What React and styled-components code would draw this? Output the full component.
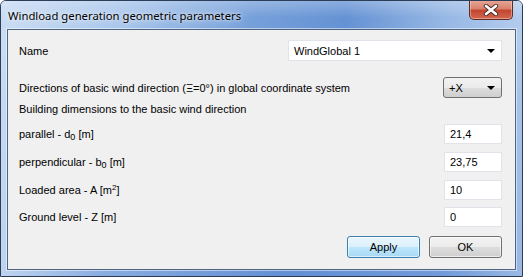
import React from "react";
import styled, { createGlobalStyle } from "styled-components";

const GlobalStyle = createGlobalStyle`
    html, body {
        margin: 0;
        padding: 0;
        background: #ffffff;
    }
    body {
        font-family: "Liberation Sans", Arial, sans-serif;
    }
`;

const Window = styled.div`
    width: 523px;
    height: 277px;
    box-sizing: border-box;
    display: flex;
    flex-direction: column;
    border: 1px solid #2c3e57;
    border-radius: 6px 6px 0 0;
    background:
        linear-gradient(90deg, rgba(214,229,246,0.8) 0%, rgba(175,203,236,0.5) 20%, rgba(110,152,212,0.1) 55%, rgba(150,185,228,0.3) 85%, rgba(190,212,238,0.6) 100%),
        linear-gradient(180deg, #b0cbec 0%, #86aadf 35%, #618dd3 100%);
    overflow: hidden;
`;

const TitleBar = styled.div`
    height: 28px;
    display: flex;
    align-items: flex-start;
    padding-left: 7px;
    background:
        linear-gradient(180deg, rgba(255,255,255,0.25) 0%, rgba(255,255,255,0) 60%),
        linear-gradient(90deg, #c9dcf3 0%, #aac7ec 22%, #76a0da 48%, #6592d4 66%, #98b9e5 86%, #b3cced 100%);
`;

const Title = styled.span`
    margin-top: 7px;
    font-family: "Noto Sans", "Open Sans", sans-serif;
    font-size: 11.3px;
    line-height: 16px;
    color: #000;
    text-shadow: 0 0 8px rgba(255,255,255,0.9), 0 0 3px rgba(255,255,255,0.9);
`;

const CloseButton = styled.div`
    margin-left: auto;
    margin-right: 9px;
    margin-top: -1px;
    width: 44px;
    height: 20px;
    box-sizing: border-box;
    border: 1px solid #5e2a22;
    border-top: none;
    border-radius: 0 0 5px 5px;
    background: linear-gradient(180deg, #e9a899 0%, #d9826e 45%, #c24630 55%, #d3674f 100%);
    display: flex;
    align-items: center;
    justify-content: center;
    box-shadow: inset 0 0 0 1px rgba(255,220,210,0.45);
`;

const Panel = styled.div`
    flex: 1;
    margin: 0 6px 6px 6px;
    background: #f0f0f0;
    border: 1px solid #4f6480;
    box-shadow: 0 0 0 1px rgba(255,255,255,0.5);
    padding: 10px 13px 0 11px;
    display: flex;
    flex-direction: column;
`;

const Row = styled.div`
    display: flex;
    align-items: center;
    justify-content: space-between;
    height: ${(p) => p.$h || 20}px;
    margin-top: ${(p) => p.$gap || 0}px;
    font-size: 11px;
    color: #000;
`;

const Label = styled.span`
    font-family: "Liberation Sans", Arial, sans-serif;
    font-size: 11px;
    white-space: nowrap;

    sub {
        font-size: 9px;
        vertical-align: -2px;
        line-height: 0;
    }
    sup {
        font-size: 8px;
        vertical-align: 4px;
        line-height: 0;
    }
`;

const Combo = styled.div`
    width: ${(p) => p.$w}px;
    height: 21px;
    box-sizing: border-box;
    display: flex;
    align-items: center;
    padding: 0 6px 0 5px;
    font-size: 11px;
    ${(p) =>
        p.$button
            ? `
        border: 1px solid #707070;
        border-radius: 3px;
        background: linear-gradient(180deg, #f2f2f2 0%, #ebebeb 50%, #dddddd 51%, #cfcfcf 100%);
    `
            : `
        border: 1px solid #e2e3ea;
        background: #ffffff;
    `}

    span {
        flex: 1;
    }
`;

const Arrow = styled.i`
    width: 0;
    height: 0;
    border-left: 4px solid transparent;
    border-right: 4px solid transparent;
    border-top: 4px solid #000;
`;

const Input = styled.div`
    width: 58px;
    height: 20px;
    box-sizing: border-box;
    border: 1px solid #e2e3ea;
    background: #fff;
    display: flex;
    align-items: center;
    padding-left: 5px;
    font-size: 11px;
`;

const Buttons = styled.div`
    display: flex;
    justify-content: flex-end;
    gap: 9px;
    margin-top: 9px;
`;

const Button = styled.div`
    width: 73px;
    height: 22px;
    box-sizing: border-box;
    border-radius: 3px;
    display: flex;
    align-items: center;
    justify-content: center;
    font-size: 11px;
    color: #000;
    border: 1px solid ${(p) => (p.$primary ? "#3c7fb1" : "#707070")};
    background: ${(p) =>
        p.$primary
            ? "linear-gradient(180deg, #eaf6fd 0%, #d9f0fc 50%, #bee6fd 51%, #a7d9f5 100%)"
            : "linear-gradient(180deg, #f2f2f2 0%, #ebebeb 50%, #dddddd 51%, #cfcfcf 100%)"};
    box-shadow: inset 0 0 0 1px rgba(255,255,255,0.6);
`;

function CloseIcon() {
    return (
        <svg width="16" height="12" viewBox="0 0 16 12">
            <path d="M3 2 L13 10 M13 2 L3 10" stroke="#4a2b25" strokeWidth="4.4" strokeLinecap="round" />
            <path d="M3 2 L13 10 M13 2 L3 10" stroke="#ffffff" strokeWidth="2.6" strokeLinecap="round" />
        </svg>
    );
}

export default function App() {
    return (
        <>
            <GlobalStyle />
            <Window>
                <TitleBar>
                    <Title>Windload generation geometric parameters</Title>
                    <CloseButton>
                        <CloseIcon />
                    </CloseButton>
                </TitleBar>
                <Panel>
                    <Row $h={21}>
                        <Label>Name</Label>
                        <Combo $w={214}>
                            <span>WindGlobal 1</span>
                            <Arrow />
                        </Combo>
                    </Row>
                    <Row $h={21} $gap={16}>
                        <Label>Directions of basic wind direction (Ξ=0°) in global coordinate system</Label>
                        <Combo $w={59} $button>
                            <span>+X</span>
                            <Arrow />
                        </Combo>
                    </Row>
                    <Row $h={16} $gap={3}>
                        <Label>Building dimensions to the basic wind direction</Label>
                    </Row>
                    <Row $gap={7}>
                        <Label>parallel - d<sub>0</sub> [m]</Label>
                        <Input>21,4</Input>
                    </Row>
                    <Row $gap={8}>
                        <Label>perpendicular - b<sub>0</sub> [m]</Label>
                        <Input>23,75</Input>
                    </Row>
                    <Row $gap={8}>
                        <Label>Loaded area - A [m<sup>2</sup>]</Label>
                        <Input>10</Input>
                    </Row>
                    <Row $gap={7}>
                        <Label>Ground level - Z [m]</Label>
                        <Input>0</Input>
                    </Row>
                    <Buttons>
                        <Button $primary>Apply</Button>
                        <Button>OK</Button>
                    </Buttons>
                </Panel>
            </Window>
        </>
    );
}
